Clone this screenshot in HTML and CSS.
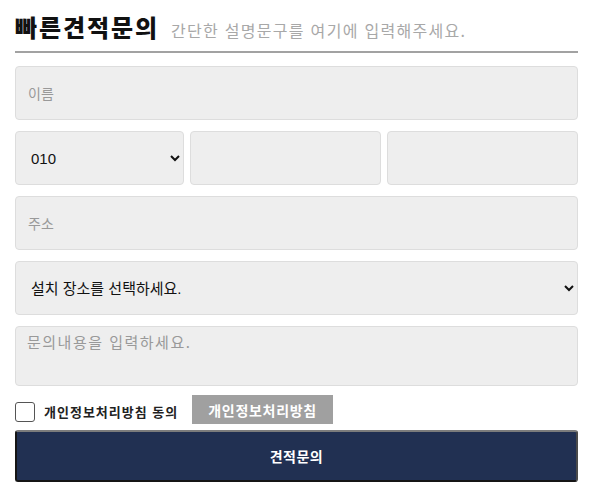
FILE: index.html
```html
<!DOCTYPE html>
<html lang="ko">
<head>
    <meta charset="UTF-8">
    <meta name="viewport" content="width=device-width, initial-scale=1.0">
    <title>빠른견적문의</title>
    <link rel="stylesheet" href="styles.css">
</head>
<body>
    <div class="quick-form">
        <div class="form-title">
            <h2>빠른견적문의</h2>
            <span class="desc">간단한 설명문구를 여기에 입력해주세요.</span>
        </div>

        <form class="fields">
            <input type="text" class="field" placeholder="이름">

            <div class="phone-row">
                <select class="field select">
                    <option>010</option>
                    <option>011</option>
                    <option>016</option>
                    <option>017</option>
                </select>
                <input type="text" class="field">
                <input type="text" class="field">
            </div>

            <input type="text" class="field" placeholder="주소">

            <select class="field select">
                <option>설치 장소를 선택하세요.</option>
                <option>가정</option>
                <option>사무실</option>
            </select>

            <textarea class="field memo" placeholder="문의내용을 입력하세요."></textarea>

            <div class="agree-row">
                <label class="agree">
                    <input type="checkbox" class="chk">
                    <span>개인정보처리방침 동의</span>
                </label>
                <button type="button" class="policy-btn">개인정보처리방침</button>
            </div>

            <button type="submit" class="submit-btn">견적문의</button>
        </form>
    </div>
</body>
</html>
```

FILE: styles.css
```css
body {
    margin: 0;
    font-family: "Noto Sans CJK KR", "Liberation Sans", sans-serif;
    background-color: #fff;
    color: #222;
}
.quick-form {
    width: 563px;
    margin: 0 0 0 15px;
    padding-top: 10px;
}
.form-title {
    display: flex;
    align-items: baseline;
    gap: 12px;
    padding-bottom: 7px;
    border-bottom: 2px solid #a2a2a2;
}
.form-title h2 {
    margin: 0;
    font-size: 24px;
    font-weight: 900;
    letter-spacing: 1.9px;
    color: #111;
    line-height: 34px;
}
.form-title .desc {
    font-size: 16px;
    letter-spacing: 1.3px;
    color: #a8a8a8;
}
.fields {
    display: flex;
    flex-direction: column;
    gap: 11px;
    margin-top: 13px;
}
.field {
    box-sizing: border-box;
    height: 54px;
    width: 100%;
    margin: 0;
    padding: 0 12px;
    background-color: #eee;
    border: 1px solid #ddd;
    border-radius: 4px;
    font-family: "Noto Sans CJK KR", "Liberation Sans", sans-serif;
    font-size: 14px;
    color: #222;
    outline: none;
}
.field::placeholder {
    color: #999;
}
.select {
    padding: 0 1px 0 11px;
    font-family: "Liberation Sans", "Noto Sans CJK KR", sans-serif;
    font-size: 15px;
    color: #111;
}
.phone-row {
    display: grid;
    grid-template-columns: 169px 1fr 1fr;
    gap: 6px;
}
.memo {
    height: 60px;
    padding: 4px 11px;
    font-size: 15px;
    letter-spacing: 1.5px;
    resize: none;
}
.agree-row {
    display: flex;
    align-items: center;
    gap: 14px;
    margin-top: -2px;
}
.agree {
    display: flex;
    align-items: center;
    gap: 9px;
    padding-top: 4px;
    font-size: 13px;
    font-weight: bold;
    letter-spacing: 1px;
    color: #222;
}
.chk {
    appearance: none;
    width: 20px;
    height: 20px;
    margin: 0;
    border: 1px solid #555;
    border-radius: 3px;
    background: #fff;
}
.policy-btn {
    height: 29px;
    padding: 0 16px;
    border: none;
    background-color: #a0a0a0;
    color: #fff;
    font-family: "Noto Sans CJK KR", sans-serif;
    font-size: 14px;
    font-weight: bold;
    letter-spacing: 0.7px;
}
.submit-btn {
    height: 52px;
    margin-top: -5px;
    border: 2px solid;
    border-color: #7c7c7c #4a4a4a #151515 #151515;
    border-radius: 3px;
    background-color: #213052;
    color: #fff;
    font-family: "Noto Sans CJK KR", sans-serif;
    font-size: 14px;
    font-weight: bold;
    letter-spacing: 0.5px;
}
```
